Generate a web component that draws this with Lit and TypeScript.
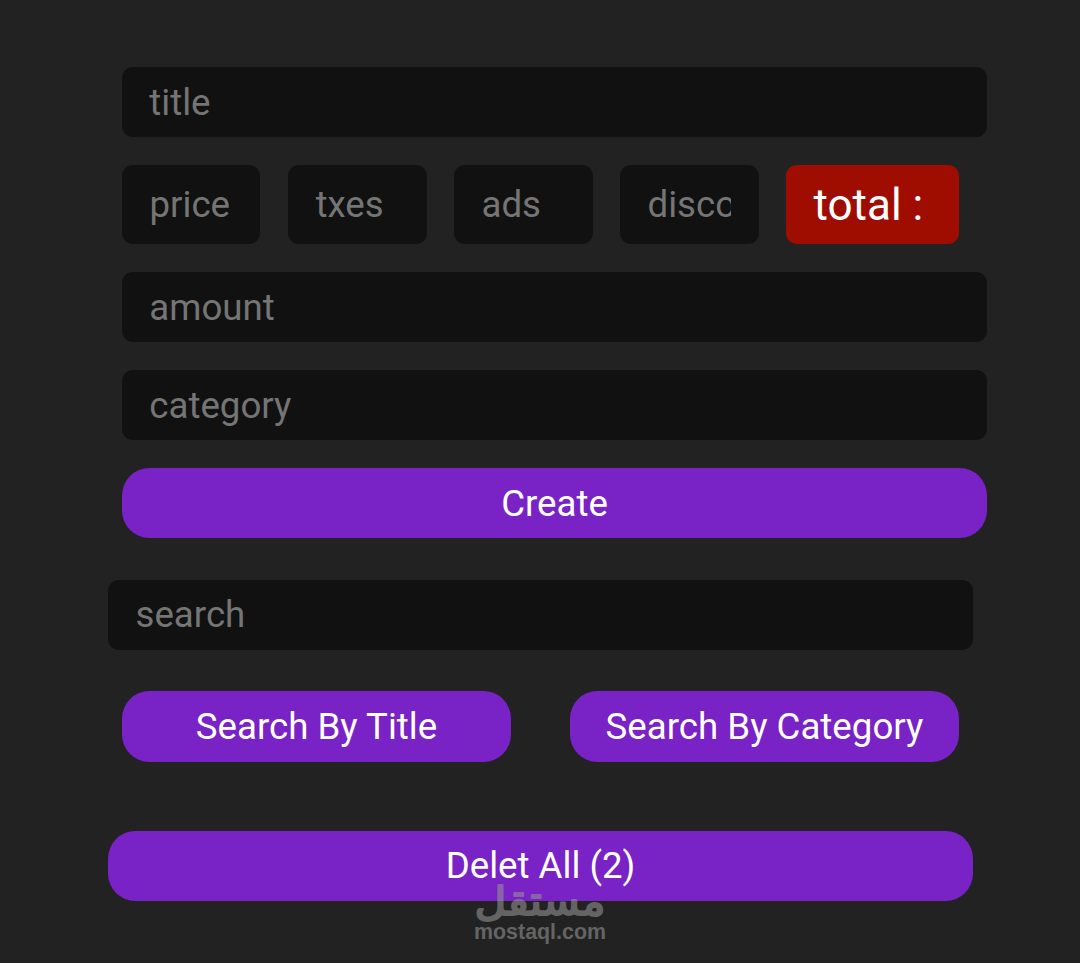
import { LitElement, css, html } from 'lit';

class AppRoot extends LitElement {
    static properties = {
        count: { state: true },
    };

    count = 2;

    static styles = css`
        :host {
            display: block;
            position: relative;
            box-sizing: border-box;
            width: 1080px;
            height: 963px;
            padding: 67px 107px 0 108px;
            overflow: hidden;
            background: #222;
            color: #fff;
            font-family: Roboto, sans-serif;
        }

        * {
            box-sizing: border-box;
        }

        .inputs {
            display: flex;
            flex-direction: column;
            gap: 28px;
            width: 865px;
            margin-left: 14px;
        }

        .price {
            display: flex;
            gap: 27.5px;
        }

        input {
            display: block;
            width: 100%;
            height: 70px;
            margin: 0;
            padding: 0 27.3px;
            border: none;
            border-radius: 11px;
            outline: none;
            background: #111;
            color: #fff;
            font: 36.67px Roboto, sans-serif;
        }

        input::placeholder {
            color: #757575;
            opacity: 1;
        }

        .price input {
            width: 138.5px;
            height: 79px;
            padding: 0 27.5px;
        }

        .price input:first-child {
            width: 138px;
            margin-right: 0.5px;
        }

        .total {
            width: 173px;
            height: 79px;
            padding: 1px 27.5px 0;
            border-radius: 11px;
            background: #9f0d00;
            font-size: 44px;
            line-height: 79px;
            white-space: pre;
        }

        button {
            display: block;
            width: 100%;
            height: 70px;
            margin: 0;
            padding: 0;
            border: none;
            border-radius: 27.5px;
            background: #7922c6;
            color: #fff;
            font: 36.67px Roboto, sans-serif;
            cursor: pointer;
        }

        .search {
            width: 865px;
            margin-top: 42px;
        }

        .search input {
            padding: 0 27.5px 2px;
        }

        .search-buttons {
            display: flex;
            justify-content: space-between;
            width: 837px;
            margin: 41px 0 0 14px;
        }

        .search-buttons button {
            width: 389px;
            height: 71px;
        }

        .delete {
            width: 865px;
            margin-top: 69px;
        }

        .delete button {
            padding-bottom: 2px;
        }

        .watermark {
            position: absolute;
            left: 470px;
            top: 878px;
            width: 140px;
            height: 70px;
            overflow: visible;
            opacity: 0.58;
            pointer-events: none;
        }

        .brand {
            fill: #949494;
            stroke: #949494;
            stroke-width: 2;
            stroke-linejoin: round;
            font: 40px 'DejaVu Sans', sans-serif;
        }

        .domain {
            fill: #949494;
            font: bold 22px 'Liberation Sans', sans-serif;
        }
    `;

    private deleteAll = () => {
        this.count = 0;
    };

    render() {
        return html`
            <div class="inputs">
                <input type="text" placeholder="title" />
                <div class="price">
                    <input type="text" placeholder="price" />
                    <input type="text" placeholder="txes" />
                    <input type="text" placeholder="ads" />
                    <input type="text" placeholder="discount" />
                    <div class="total">total :</div>
                </div>
                <input type="text" placeholder="amount" />
                <input type="text" placeholder="category" />
                <button type="button">Create</button>
            </div>

            <div class="search">
                <input type="text" placeholder="search" />
            </div>
            <div class="search-buttons">
                <button type="button">Search By Title</button>
                <button type="button">Search By Category</button>
            </div>

            <div class="delete">
                <button type="button" @click=${this.deleteAll}>Delet All (${this.count})</button>
            </div>

            <svg class="watermark" viewBox="0 0 140 70" aria-hidden="true">
                <text class="brand" x="70" y="37" text-anchor="middle" textLength="131" lengthAdjust="spacingAndGlyphs">مستقل</text>
                <text class="domain" x="4" y="61" textLength="132" lengthAdjust="spacingAndGlyphs">mostaql.com</text>
            </svg>
        `;
    }
}

customElements.define('app-root', AppRoot);
